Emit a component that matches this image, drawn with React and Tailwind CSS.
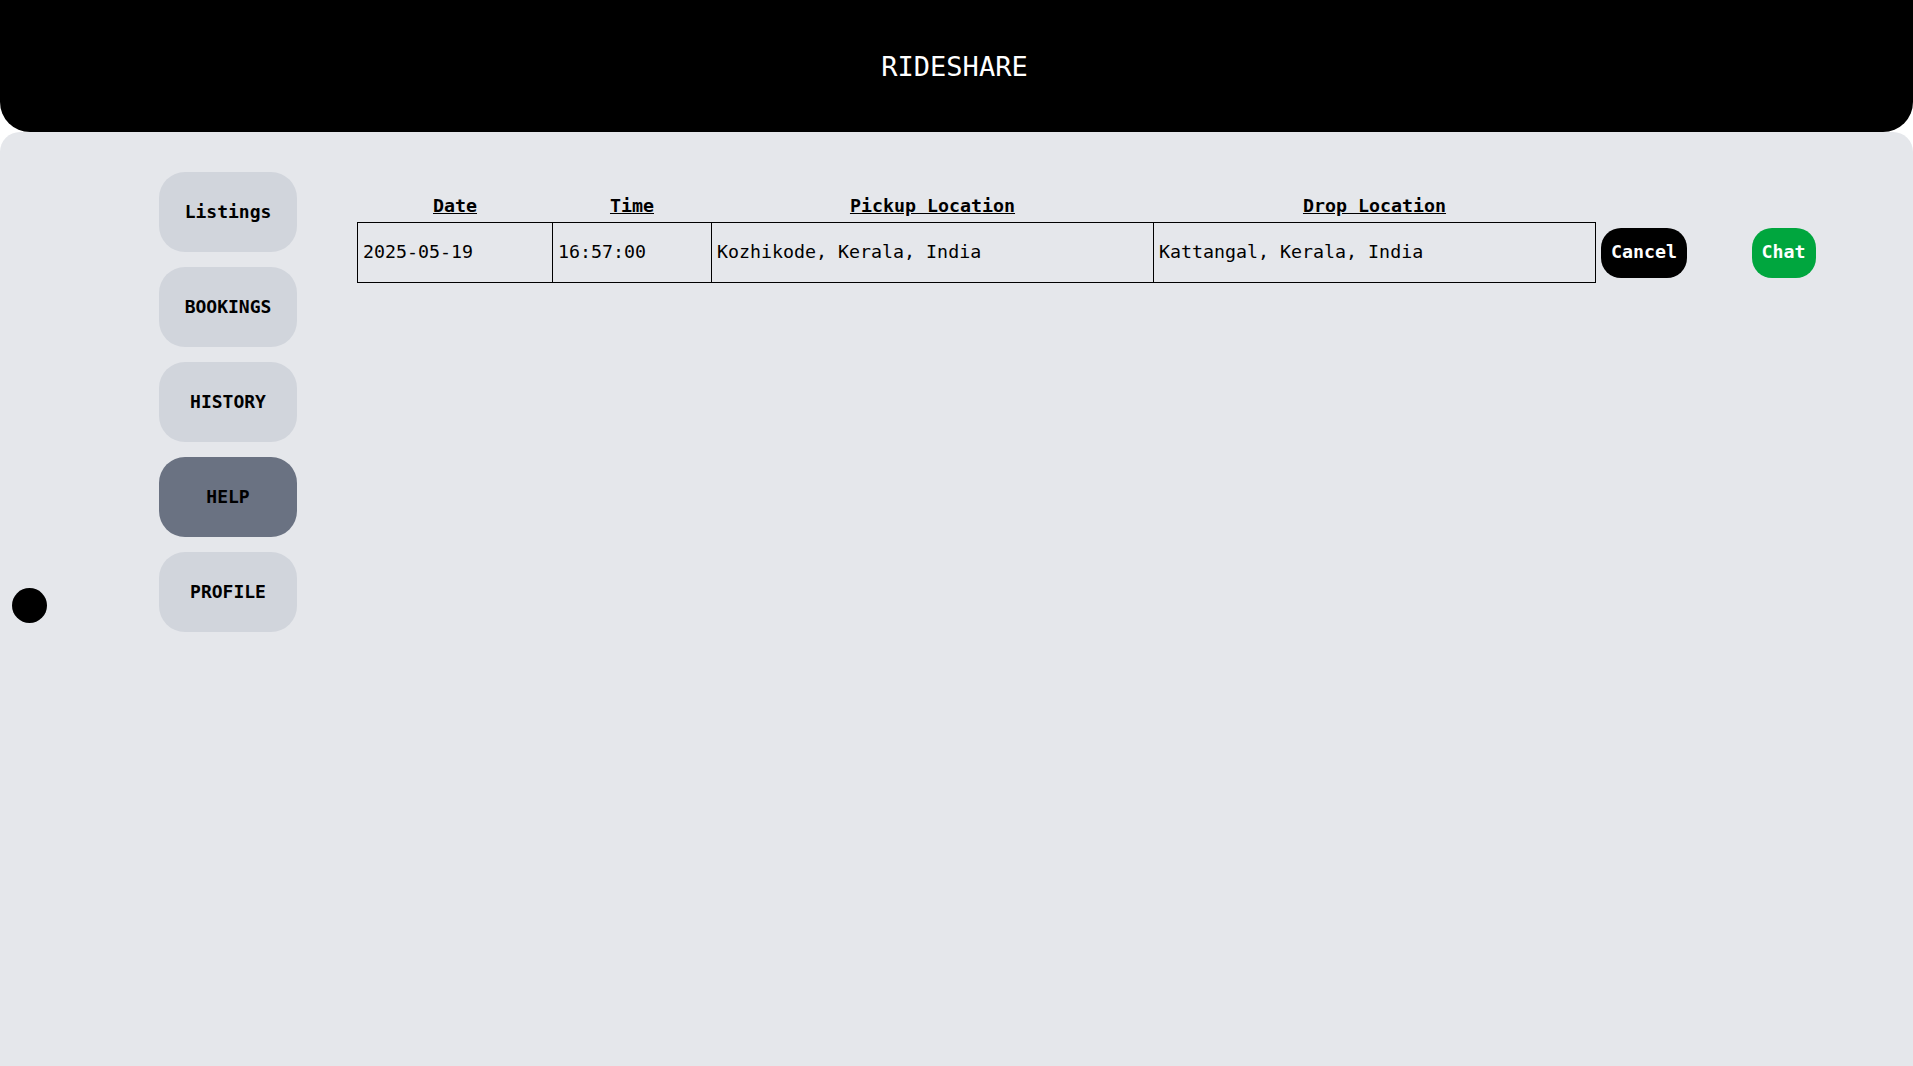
import { useState } from "react";

const NAV = ["Listings", "BOOKINGS", "HISTORY", "HELP", "PROFILE"];

const rides = [
    {
        date: "2025-05-19",
        time: "16:57:00",
        pickup: "Kozhikode, Kerala, India",
        drop: "Kattangal, Kerala, India",
    },
];

const App = () => {

    const [active, setActive] = useState("HELP");

    return (
        <div className="min-h-screen flex flex-col bg-white font-['DejaVu_Sans_Mono',monospace] text-black">

            <header className="h-[132px] bg-black rounded-b-[30px] flex items-center justify-center">
                <h1 className="text-white text-[27px] leading-none -translate-x-[2px]">RIDESHARE</h1>
            </header>

            <main className="flex-1 bg-gray-200 rounded-t-[20px] flex pl-[159px] pt-[40px] gap-[60px]">

                <nav className="flex flex-col gap-[15px] w-[138px] shrink-0">
                    {NAV.map((item) => (
                        <button
                            key={item}
                            onClick={() => setActive(item)}
                            className={`h-[80px] rounded-[26px] font-bold text-[18px] pb-[2px] ${
                                active === item ? "bg-gray-500" : "bg-gray-300"
                            }`}
                        >
                            {item}
                        </button>
                    ))}
                </nav>

                <div className="pt-[18px]">
                    <table className="table-fixed border-collapse text-[18.3px]">
                        <thead>
                            <tr>
                                <th className="w-[195px] font-bold underline leading-[32px]">Date</th>
                                <th className="w-[159px] font-bold underline leading-[32px]">Time</th>
                                <th className="w-[442px] font-bold underline leading-[32px]">Pickup Location</th>
                                <th className="w-[442px] font-bold underline leading-[32px]">Drop Location</th>
                                <th className="w-[156px]"></th>
                                <th className="w-[70px]"></th>
                            </tr>
                        </thead>
                        <tbody>
                            {rides.map((r) => (
                                <tr key={r.date + r.time} className="h-[60px]">
                                    <td className="border border-black px-[5px] pb-[2px]">{r.date}</td>
                                    <td className="border border-black px-[5px] pb-[2px]">{r.time}</td>
                                    <td className="border border-black px-[5px] pb-[2px]">{r.pickup}</td>
                                    <td className="border border-black px-[5px] pb-[2px]">{r.drop}</td>
                                    <td className="pl-[5px] py-[5px]">
                                        <button className="h-[50px] px-[10px] pb-[2px] rounded-[20px] bg-black text-white font-bold">
                                            Cancel
                                        </button>
                                    </td>
                                    <td className="py-[5px]">
                                        <button className="h-[50px] px-[10px] pb-[2px] rounded-[20px] bg-green-600 text-white font-bold">
                                            Chat
                                        </button>
                                    </td>
                                </tr>
                            ))}
                        </tbody>
                    </table>
                </div>

            </main>

            <div className="fixed left-[12px] top-[588px] w-[35px] h-[35px] rounded-full bg-black"></div>

        </div>
    );

};

export default App;
